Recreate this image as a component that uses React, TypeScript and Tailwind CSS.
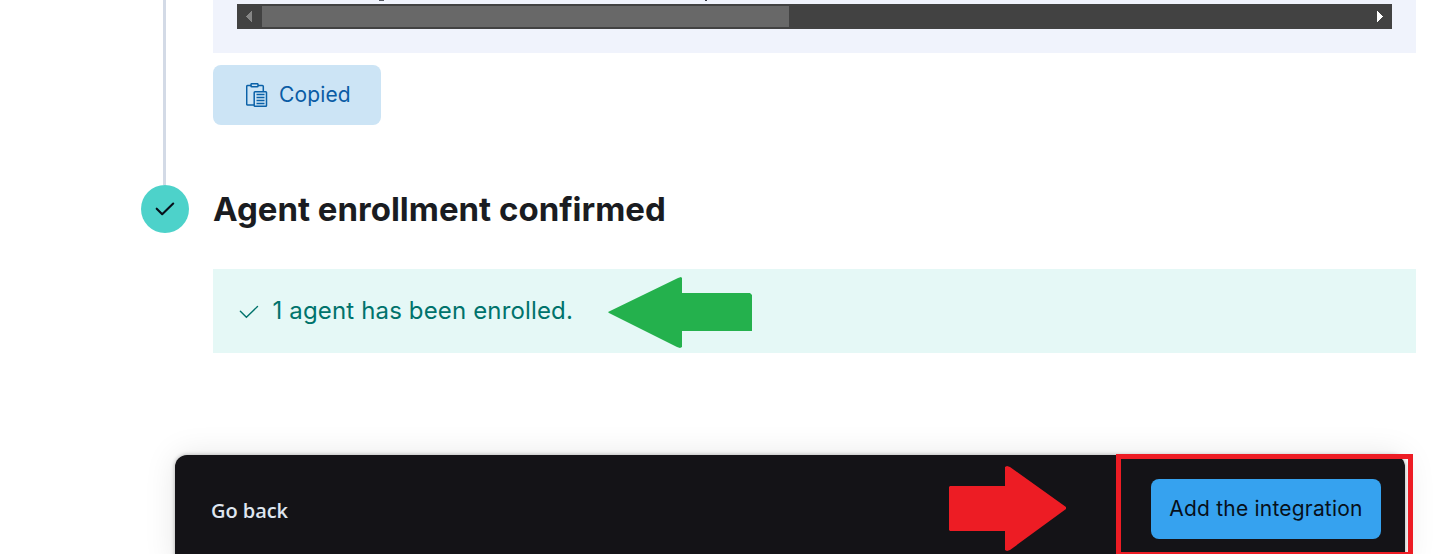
import React from "react";

function CodeScrollPanel() {
  return (
    <div className="h-[53px] bg-[#f0f3fc] px-6">
      <div className="flex h-1 items-start">
        <svg className="h-1 w-full" viewBox="0 0 1155 4" shapeRendering="crispEdges">
          <path d="M142 0h5" stroke="#555962" strokeWidth="2" />
          <path d="M468 0h2" stroke="#343741" strokeWidth="2" />
        </svg>
      </div>
      <div className="flex h-[25px] items-center justify-between bg-[#424242]">
        <div className="flex items-center">
          <svg className="h-[21px] w-[25px]" viewBox="0 0 25 21" shapeRendering="crispEdges">
            <path d="M15 5v11L9 10.5z" fill="#868686" />
          </svg>
          <div className="h-[21px] w-[527px] bg-[#686868]" />
        </div>
        <svg className="h-[21px] w-[25px]" viewBox="0 0 25 21" shapeRendering="crispEdges">
          <path d="M10 5v11l6-5.500z" fill="#fff" />
        </svg>
      </div>
    </div>
  );
}

function ClipboardIcon() {
  return (
    <svg className="h-6 w-[22px] shrink-0" viewBox="0 0 22 24" fill="none" stroke="#0a61a8" strokeWidth="1.5">
      <path d="M5.500 2.500H1.700a1 1 0 0 0-1 1V21a1 1 0 0 0 1 1H8" />
      <path d="M12 2.500h4.300a1 1 0 0 1 1 1V8" />
      <rect x="5" y="0.700" width="7" height="3" rx="0.800" />
      <rect x="8.200" y="8.700" width="12.300" height="14.500" rx="0.800" />
      <path d="M10.500 11.500h8M10.500 14.500h8M10.500 17.500h8M10.500 20.500h8" strokeWidth="1.300" />
    </svg>
  );
}

function BottomBar() {
  return (
    <div className="relative mt-[102px] ml-[175px] flex h-[110px] w-[1230px] justify-between rounded-t-xl bg-[#141317] pr-6 pl-9 shadow-[0_0_4px_rgba(0,0,0,0.3),0_0_32px_rgba(0,0,0,0.1)]">
      <button className="mt-[41px] h-[30px] font-['Open_Sans',sans-serif] text-[20px] leading-[30px] font-semibold tracking-[-0.05px] whitespace-nowrap text-[#dfe5ef]">
        Go back
      </button>
      <button className="mt-6 h-[60px] w-[230px] rounded-lg bg-[#36a2ef] text-[21px] leading-[60px] tracking-[0.2px] whitespace-nowrap text-[#07101a]">
        Add the integration
      </button>
      <svg className="absolute top-[10px] left-[774px] h-[87px] w-[118px]" viewBox="0 0 118 87">
        <path d="M1 21H56V2l2-1 3 1 56 40v2L61 85l-3 1-2-1V66H1l-1-1V22z" fill="#ed1c24" />
      </svg>
      <div className="absolute top-[-1px] left-[941px] h-[100px] w-[297px] border-[5px] border-b-2 border-[#ed1c24]" />
    </div>
  );
}

export default function App() {
  return (
    <main className="h-[554px] w-[1448px] overflow-hidden bg-white font-['Inter',sans-serif]">
      <div className="flex h-[353px]">
        <div className="ml-[141px] flex w-12 shrink-0 flex-col items-center">
          <div className="h-[185px] w-[3px] -translate-x-px bg-[#d3dae6]" />
          <div className="flex h-12 w-12 items-center justify-center rounded-full bg-[#4dd2ca]">
            <svg className="h-6 w-6" viewBox="0 0 24 24" fill="none">
              <path d="m3.700 11.700 5.500 5.500L20.200 6.500" stroke="#07101a" strokeWidth="2.100" strokeLinecap="round" strokeLinejoin="round" />
            </svg>
          </div>
        </div>
        <div className="ml-6 w-[1203px]">
          <CodeScrollPanel />
          <button className="mt-3 flex h-[60px] w-[168px] items-center gap-[11px] rounded-lg bg-[#cce4f5] pl-[33px] text-[21px] text-[#0a5ca5]">
            <ClipboardIcon />
            <span className="tracking-[0.15px]">Copied</span>
          </button>
          <h2 className="mt-[60px] h-12 text-[33px] leading-[49px] font-bold whitespace-nowrap text-[#1a1c21]">
            Agent enrollment confirmed
          </h2>
          <div className="relative mt-9 flex h-[84px] items-center bg-[#e5f8f6] pl-6 text-[24px] text-[#00736c]">
            <svg className="h-6 w-6 shrink-0" viewBox="0 0 24 24" fill="none">
              <path d="m3.400 12.200 6 6L20.500 7.500" stroke="currentColor" strokeWidth="1.400" strokeLinecap="round" />
            </svg>
            <span className="ml-[11.500px] font-[430] tracking-[0.15px] whitespace-nowrap">1 agent has been enrolled.</span>
            <svg className="absolute top-2 left-[395px] h-[72px] w-[144px]" viewBox="0 0 144 72">
              <path d="M0 35L70 1l3-1 1 1v15h68l2 2v36H74v16l-2 1-3-1L1 36z" fill="#24b14d" />
            </svg>
          </div>
        </div>
      </div>
      <BottomBar />
    </main>
  );
}
